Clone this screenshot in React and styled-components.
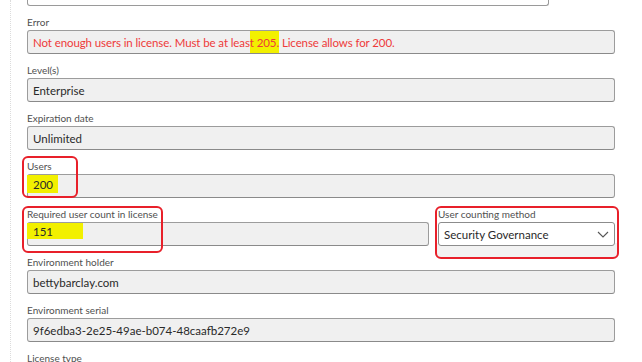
import styled, { createGlobalStyle } from 'styled-components';

const GlobalStyle = createGlobalStyle`
  body {
    margin: 0;
    background: #fff;
    font-family: Lato, 'Open Sans', sans-serif;
  }
`;

const Page = styled.div`
  height: 362px;
  overflow: hidden;
  margin-left: 10px;
  border-left: 1px dotted #dcdcdc;
  padding-left: 16px;
`;

const Form = styled.div`
  width: 588px;
  display: flex;
  flex-direction: column;
  gap: 10px;
`;

const TopStub = styled.div`
  width: 520px;
  height: 5px;
  border: 1px solid #9a9a9a;
  border-top: none;
  border-radius: 0 0 3px 3px;
  background: #fff;
`;

const Row = styled.div`
  display: flex;
  gap: 9px;
`;

const Field = styled.div`
  position: relative;
  display: flex;
  flex-direction: column;
  width: ${(p) => p.width || '100%'};
  flex: ${(p) => (p.width ? 'none' : '1')};
`;

const Label = styled.div`
  font-size: 10px;
  line-height: 13px;
  height: 13px;
  margin-bottom: 1px;
  color: #505050;
  white-space: nowrap;
  position: relative;
  z-index: 1;
`;

const Box = styled.div`
  box-sizing: border-box;
  height: 24px;
  border: 1px solid ${(p) => (p.select ? '#8c8c8c' : '#9c9c9c')};
  border-bottom-color: ${(p) => (p.select ? '#8c8c8c' : '#8a8a8a')};
  border-radius: 3px;
  background: ${(p) => (p.select ? '#fff' : '#f0f0f0')};
  padding: 0 5px;
  display: flex;
  align-items: center;
  justify-content: space-between;
  font-size: 11.5px;
  letter-spacing: ${(p) => (p.error ? '-0.1px' : '0')};
  color: ${(p) => (p.error ? '#ee3a3a' : '#2a2a2a')};
  white-space: nowrap;
`;

const ErrorText = styled.span`
  display: flex;
  align-self: stretch;
  align-items: center;
`;

const Mark = styled.span`
  background: #f2f000;
  align-self: ${(p) => (p.edge ? 'flex-start' : 'stretch')};
  display: inline-flex;
  align-items: center;
  height: ${(p) => p.h || 'auto'};
  margin-left: ${(p) => (p.edge ? '-6px' : '0')};
  padding-left: ${(p) => (p.edge ? '6px' : '0')};
  width: ${(p) => p.w || 'auto'};
`;

const Annotation = styled.div`
  position: absolute;
  left: ${(p) => p.l}px;
  top: ${(p) => p.t}px;
  width: ${(p) => p.w}px;
  height: ${(p) => p.h}px;
  border: 2px solid #e8202a;
  border-radius: 6px;
  box-sizing: border-box;
  pointer-events: none;
  background: ${(p) => (p.fill ? 'linear-gradient(#fff 0, #fff 72%, #f2f2f2 72%)' : 'transparent')};
  z-index: ${(p) => (p.fill ? 0 : 2)};
`;

const SelectWrap = styled.div`
  position: relative;
  z-index: 1;
`;

const Chevron = () => (
  <svg width="12" height="7" viewBox="0 0 12 7">
    <path d="M1 1l5 5 5-5" fill="none" stroke="#555" strokeWidth="1.1" />
  </svg>
);

export default function App() {
  return (
    <Page>
      <GlobalStyle />
      <Form>
        <TopStub />
        <Field>
          <Label>Error</Label>
          <Box error>
            <ErrorText>
              Not enough users in license. Must be at leas
              <Mark>t 205.</Mark>
              &nbsp;License allows for 200.
            </ErrorText>
          </Box>
        </Field>
        <Field>
          <Label>Level(s)</Label>
          <Box>Enterprise</Box>
        </Field>
        <Field>
          <Label>Expiration date</Label>
          <Box>Unlimited</Box>
        </Field>
        <Field>
          <Annotation l={-5} t={-4} w={56} h={42} />
          <Label>Users</Label>
          <Box>
            <Mark edge h="18px" w="25px">200</Mark>
          </Box>
        </Field>
        <Row>
          <Field width="402px">
            <Annotation l={-5} t={-2} w={141} h={47} />
            <Label>Required user count in license</Label>
            <Box>
              <Mark edge h="16px" w="50px">151</Mark>
            </Box>
          </Field>
          <Field>
            <Annotation l={-3} t={-2} w={184} h={53} fill />
            <Label>User counting method</Label>
            <SelectWrap>
              <Box select>
                Security Governance
                <Chevron />
              </Box>
            </SelectWrap>
          </Field>
        </Row>
        <Field>
          <Label>Environment holder</Label>
          <Box>bettybarclay.com</Box>
        </Field>
        <Field>
          <Label>Environment serial</Label>
          <Box>9f6edba3-2e25-49ae-b074-48caafb272e9</Box>
        </Field>
        <Field>
          <Label>License type</Label>
        </Field>
      </Form>
    </Page>
  );
}
